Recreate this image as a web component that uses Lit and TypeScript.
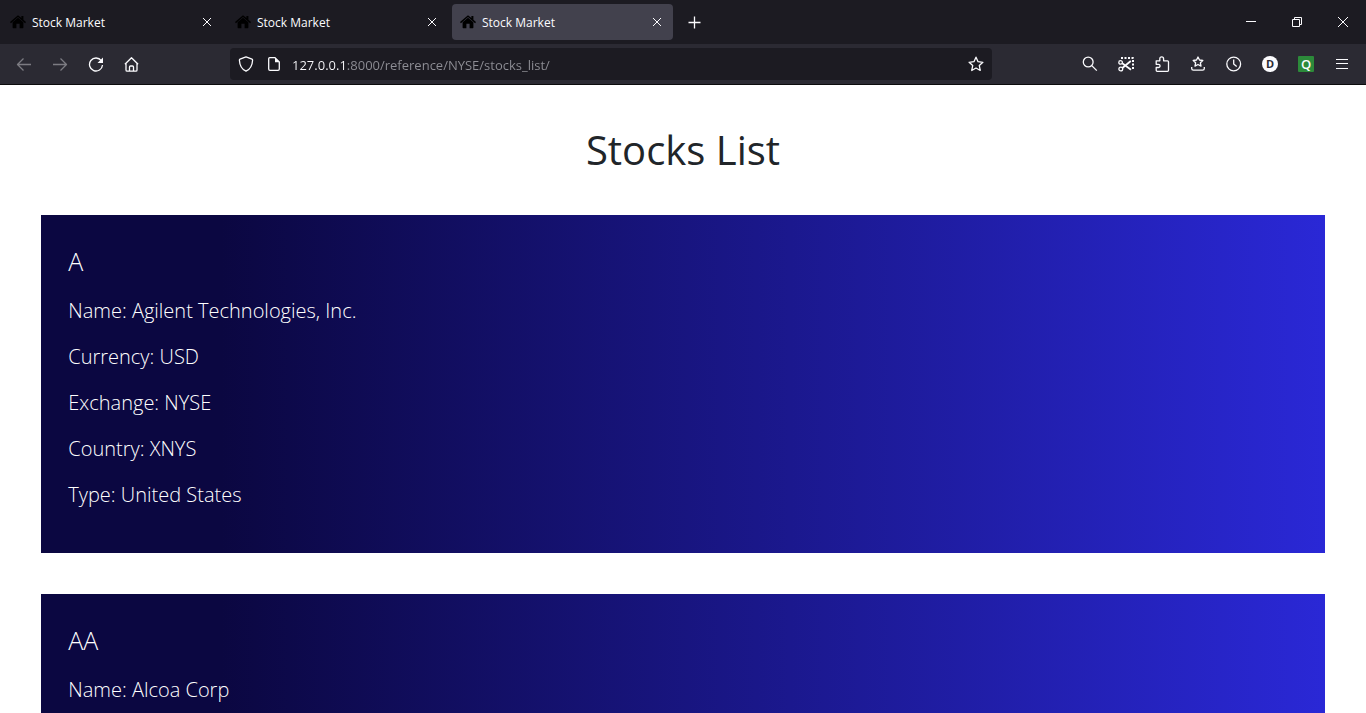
import { LitElement, html, css, svg } from "lit";
import { customElement, property, state } from "lit/decorators.js";

interface Stock {
  symbol: string;
  name: string;
  currency: string;
  exchange: string;
  country: string;
  type: string;
}

const STOCKS: Stock[] = [
  { symbol: "A", name: "Agilent Technologies, Inc.", currency: "USD", exchange: "NYSE", country: "XNYS", type: "United States" },
  { symbol: "AA", name: "Alcoa Corp", currency: "USD", exchange: "NYSE", country: "XNYS", type: "United States" },
];

const STAR =
  "M8 1.2l2.05 4.5 4.85.6-3.6 3.3.95 4.85L8 12.05l-4.25 2.4.95-4.85L1.1 6.3l4.85-.6z";

const ICONS = {
  back: svg`<path d="M15 8.500H1.500M7.500 2.500L1.500 8.500l6 6"/>`,
  forward: svg`<path d="M1 8.500h13.500M8.500 2.500l6 6-6 6"/>`,
  reload: svg`<path d="M13.300 4.700A6.500 6.500 0 1 0 14.500 9"/><path class="solid" d="M15 1.500V7H9.500z"/>`,
  home: svg`<path d="M.9 8.300L7.500 1.700l6.600 6.600M2 7.500V14q0 1.200 1.200 1.200h8.600q1.200 0 1.200-1.200V7.500M5.500 15v-4q0-1 1-1h2q1 0 1 1v4"/>`,
  shield: svg`<path d="M8 .9l6 2.300q.7.300.6 1.100C14.300 9.500 12 13.500 8 15.200 4 13.500 1.700 9.500 1.400 4.300q-.1-.8.6-1.100z"/>`,
  page: svg`<path d="M3.700 1.700h5.300l4.300 4.300v7q0 1.300-1.300 1.300H4q-1.300 0-1.300-1.300V2.700q0-1 1-1z"/><path class="solid" d="M9 1.500v4.700h4.500z"/>`,
  star: svg`<path d=${STAR}/>`,
  search: svg`<circle cx="6.200" cy="6" r="4.900"/><path d="M9.800 9.600l5 5"/>`,
  shot: svg`<path stroke-dasharray="2 1.500" stroke-width="2" d="M3 2h12v11"/><circle cx="2.600" cy="6.400" r="1.800"/><circle cx="2.800" cy="13" r="1.900"/><path stroke-width="1.800" d="M4.200 7.300l8.800 6.400M4.300 12L12.800 5"/>`,
  puzzle: svg`<path d="M2.200 4.800h3.600V2.900q0-2 1.900-2t1.900 2v1.900h3.900q1 0 1 1v8.500q0 1-1 1H3.200q-1 0-1-1v-2.800h2.100q1.700 0 1.700-1.600T4.300 8.300H2.200z" />`,
  saved: svg`<path d="M8 1l1.500 3 3.300.5-2.400 2.300.6 3.300L8 8.500l-3 1.600.6-3.300-2.400-2.300L6.500 4z"/><path d="M1.700 11v1.500q0 1.700 1.700 1.700h9.200q1.700 0 1.700-1.700V11"/>`,
  clock: svg`<circle cx="7.700" cy="8" r="6.900"/><path d="M7.700 3.500V8l3 2.500"/>`,
  menu: svg`<path d="M2 3.500h12M2 7.500h12M2 12.500h12"/>`,
  close: svg`<path d="M4 4l8 8M12 4l-8 8"/>`,
  plus: svg`<path d="M7.500 2.500v12M1.500 8.500h12"/>`,
  minimise: svg`<path d="M3 7.500h10"/>`,
  restore: svg`<path d="M3.500 5.500h7v7h-7zM5.500 5V3.500h7v7H11"/>`,
  quit: svg`<path d="M3 3l10 10M13 3L3 13"/>`,
};

const icon = (name: keyof typeof ICONS) =>
  html`<svg class="icon ${name}" viewBox="0 0 16 16" aria-hidden="true">${ICONS[name]}</svg>`;

const iconStyles = css`
  :host, * { box-sizing: border-box; }
  button {
    display: grid;
    place-items: center;
    margin: 0;
    padding: 0;
    border: 0;
    color: inherit;
    background: none;
    font: inherit;
  }
  .icon {
    display: block;
    width: 16px;
    height: 16px;
    flex: none;
    fill: none;
    stroke: currentColor;
    stroke-width: 1.3;
    stroke-linejoin: round;
  }
  .solid { fill: currentColor; stroke: none; }
  .close, .quit, .minimise, .restore, .menu { stroke-width: 1; }
`;

@customElement("tab-strip")
export class TabStrip extends LitElement {
  static styles = [
    iconStyles,
    css`
      :host {
        display: flex;
        justify-content: space-between;
        height: 44px;
        background: #1c1b22;
        color: #fbfbfe;
      }
      .tabs {
        display: flex;
        align-items: center;
        gap: 4px;
        padding-left: 2px;
      }
      .tab {
        display: flex;
        align-items: center;
        width: 221px;
        height: 36px;
        padding: 0 4px 0 8px;
        border-radius: 4px;
      }
      .tab.selected { background: #42414d; }
      .label {
        display: flex;
        flex: 1;
        align-items: center;
        gap: 6px;
        font-size: 12px;
        line-height: 16px;
      }
      .label span { padding-top: 2px; }
      .house { width: 16px; height: 16px; fill: #000; }
      .shut { width: 24px; height: 24px; }
      .add { width: 36px; height: 36px; }
      .window { display: flex; }
      .window button { width: 46px; height: 44px; }
    `,
  ];

  @state() selected = 2;

  render() {
    return html`
      <div class="tabs" role="tablist">
        ${[0, 1, 2].map(
          (i) => html`<div class="tab ${i === this.selected ? "selected" : ""}">
            <button class="label" role="tab" aria-selected=${i === this.selected} @click=${() => (this.selected = i)}>
              <svg class="house" viewBox="0 0 16 16" aria-hidden="true">
                <path d="M8 3.800l5.400 4.500v5.200q0 .7-.7.7H9.600v-4.400H6.400v4.400H3.300q-.7 0-.7-.7V8.300z" />
                <path d="M8 1.200l3.400 2.900V2h2v3.800L16 8l-.9 1.200L8 3.100.9 9.200 0 8z" />
              </svg>
              <span>Stock Market</span>
            </button>
            <button class="shut" aria-label="Close tab">${icon("close")}</button>
          </div>`
        )}
        <button class="add" aria-label="New tab">${icon("plus")}</button>
      </div>
      <div class="window">
        <button aria-label="Minimise">${icon("minimise")}</button>
        <button aria-label="Restore">${icon("restore")}</button>
        <button aria-label="Close window">${icon("quit")}</button>
      </div>
    `;
  }
}

@customElement("nav-bar")
export class NavBar extends LitElement {
  static styles = [
    iconStyles,
    css`
      :host {
        display: flex;
        align-items: center;
        justify-content: space-between;
        gap: 80px;
        height: 41px;
        padding: 0 6px;
        background: #2b2a33;
        border-bottom: 1px solid #0c0c0d;
        color: #fbfbfe;
      }
      .group { display: flex; }
      .group button { width: 36px; height: 32px; }
      .group button:disabled { color: #7c7b82; }
      .address {
        display: flex;
        flex: 1;
        align-items: center;
        height: 32px;
        border-radius: 4px;
        background: #1c1b22;
      }
      .address button { width: 32px; height: 32px; }
      .address .page-info { width: 24px; margin-right: 6px; }
      input {
        flex: 1;
        min-width: 0;
        height: 32px;
        padding: 2px 0 0;
        border: 0;
        outline: 0;
        font: inherit;
        font-size: 13px;
        color: transparent;
        caret-color: #fbfbfe;
        background: linear-gradient(90deg, #fbfbfe 55px, #8f8f96 55px);
        background-clip: text;
        -webkit-background-clip: text;
      }
      .badge {
        display: grid;
        place-items: center;
        width: 16px;
        height: 16px;
        font-weight: 700;
        line-height: 16px;
      }
      .round { border-radius: 8px; background: #fbfbfe; color: #2b2a33; font-size: 11px; }
      .green { border-radius: 1px; background: #2c8a3a; font-size: 13px; font-weight: 600; }
    `,
  ];

  render() {
    return html`
      <div class="group">
        <button aria-label="Back" disabled>${icon("back")}</button>
        <button aria-label="Forward" disabled>${icon("forward")}</button>
        <button aria-label="Reload">${icon("reload")}</button>
        <button aria-label="Home">${icon("home")}</button>
      </div>
      <div class="address">
        <button aria-label="Tracking protection">${icon("shield")}</button>
        <button class="page-info" aria-label="Page information">${icon("page")}</button>
        <input type="text" aria-label="Address" spellcheck="false" value="127.0.0.1:8000/reference/NYSE/stocks_list/" />
        <button aria-label="Bookmark this page">${icon("star")}</button>
      </div>
      <div class="group">
        <button aria-label="Search">${icon("search")}</button>
        <button aria-label="Screenshot">${icon("shot")}</button>
        <button aria-label="Extensions">${icon("puzzle")}</button>
        <button aria-label="Bookmarks">${icon("saved")}</button>
        <button aria-label="History">${icon("clock")}</button>
        <button><span class="badge round">D</span></button>
        <button><span class="badge green">Q</span></button>
        <button aria-label="Menu">${icon("menu")}</button>
      </div>
    `;
  }
}

@customElement("stock-card")
export class StockCard extends LitElement {
  static styles = css`
    :host {
      display: block;
      padding: 26px 2vw 43px;
      background: linear-gradient(90deg, #0b0741 14%, #2a28d6 100%);
      color: #fff;
      font-weight: 300;
    }
    h2 { margin: 0 0 15px; font-size: 25px; font-weight: 300; line-height: 40px; }
    p { margin: 0 0 16px; font-size: 20px; line-height: 30px; }
    p:last-child { margin: 0; }
  `;

  @property({ attribute: false }) stock!: Stock;

  render() {
    const s = this.stock;
    return html`
      <h2>${s.symbol}</h2>
      <p>Name: ${s.name}</p>
      <p>Currency: ${s.currency}</p>
      <p>Exchange: ${s.exchange}</p>
      <p>Country: ${s.country}</p>
      <p>Type: ${s.type}</p>
    `;
  }
}

@customElement("app-root")
export class AppRoot extends LitElement {
  static styles = css`
    :host {
      display: flex;
      flex-direction: column;
      height: 100vh;
      overflow: hidden;
      background: #fff;
      font-family: "Open Sans", "Noto Sans", sans-serif;
    }
    tab-strip, nav-bar { flex: none; }
    main {
      flex: 1;
      min-height: 0;
      overflow-y: auto;
      scrollbar-width: none;
      padding: 41px 3%;
    }
    h1 {
      margin: 0 0 41px;
      color: #212529;
      font-size: 40px;
      font-weight: 400;
      line-height: 48px;
      text-align: center;
    }
    stock-card { margin-bottom: 41px; }
  `;

  render() {
    return html`
      <tab-strip></tab-strip>
      <nav-bar></nav-bar>
      <main>
        <h1>Stocks List</h1>
        ${STOCKS.map((s) => html`<stock-card .stock=${s}></stock-card>`)}
      </main>
    `;
  }
}
